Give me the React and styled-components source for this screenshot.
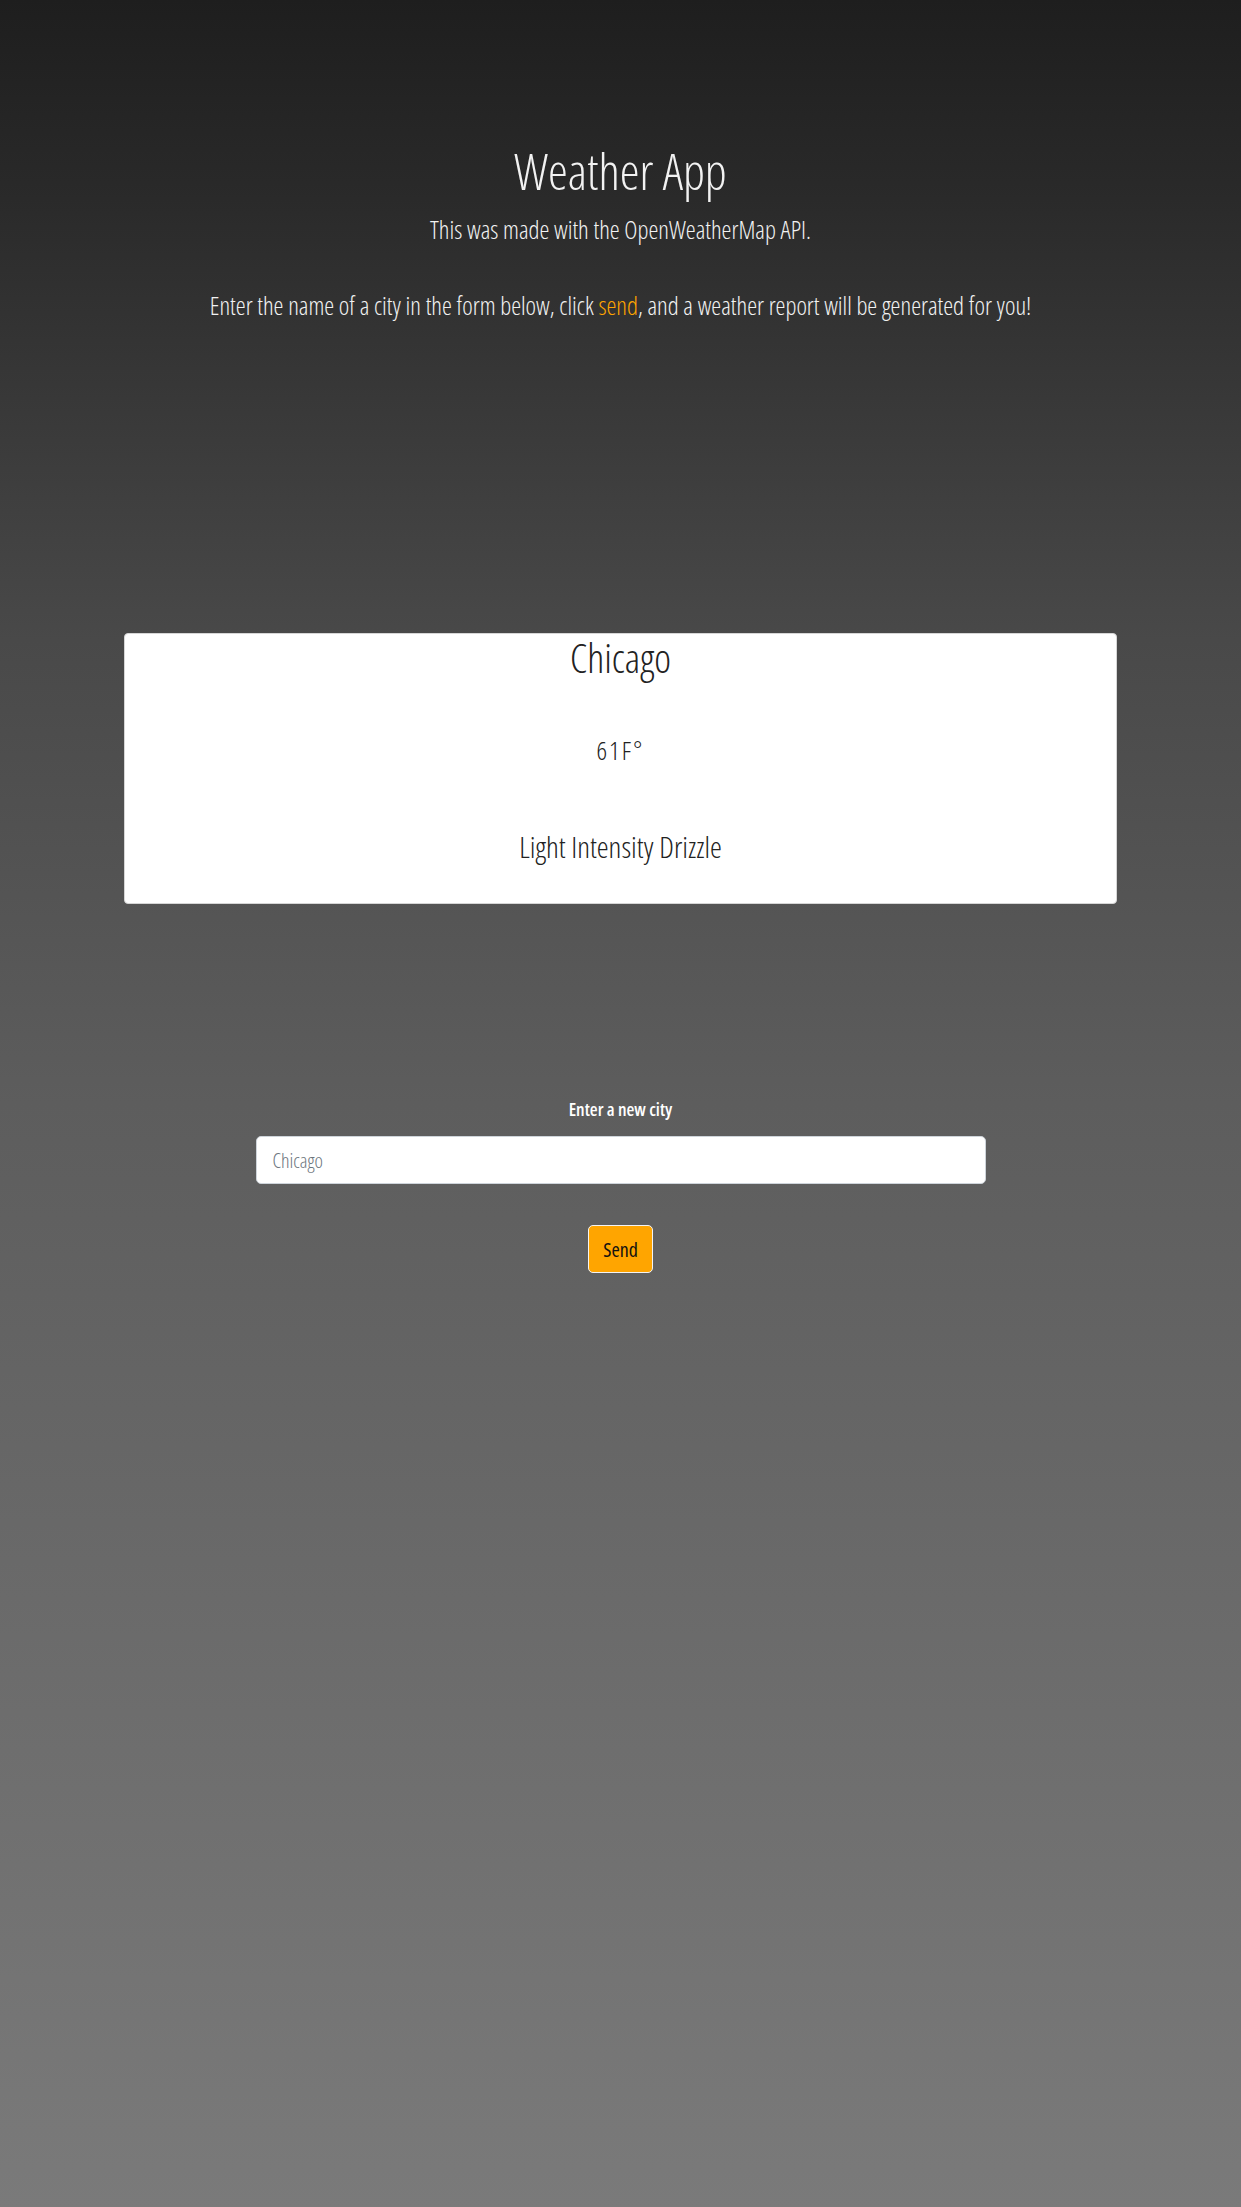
import React, { useState } from "react";
import styled, { createGlobalStyle } from "styled-components";

const GlobalStyle = createGlobalStyle`
	html,
	body {
		margin: 0;
		min-height: 100%;
	}
	body {
		min-height: 100vh;
		font-family: "Open Sans", "Liberation Sans", sans-serif;
		font-stretch: 75%;
		font-weight: 300;
		background: linear-gradient(
			180deg,
			#1e1e1e 0%,
			#2a2a2a 9%,
			#494949 29%,
			#5d5d5d 50%,
			#7a7a7a 100%
		);
		background-attachment: fixed;
		color: #f2f2f2;
	}
`;

const Page = styled.div`
	min-height: 100vh;
	text-align: center;
	overflow: hidden;
`;

const Header = styled.header`
	padding-top: 141px;
`;

const Title = styled.h1`
	margin: 0;
	font-size: 50px;
	font-weight: 300;
	line-height: 1.2;
`;

const Text = styled.p`
	margin: ${(p) => p.$top || 0}px 0 0;
	font-size: 25px;
	line-height: 1.5;
`;

const Highlight = styled.span`
	color: #ffa500;
`;

const Card = styled.section`
	width: 80%;
	margin: 309px auto 0;
	background: #fff;
	border: 1px solid #d6d6d6;
	border-radius: 4px;
	box-sizing: border-box;
	padding: 0 0 38px;
	color: #222;
	display: flex;
	flex-direction: column;
	align-items: center;
`;

const Reading = styled.div`
	margin-top: ${(p) => p.$top || 0}px;
	font-size: ${(p) => p.$size}px;
	letter-spacing: ${(p) => p.$spacing || 0}px;
	line-height: 1.2;
`;

const Form = styled.form`
	width: 730px;
	margin: 192px auto 0;
	display: flex;
	flex-direction: column;
	align-items: center;
`;

const Label = styled.label`
	font-size: 18px;
	font-weight: 600;
	line-height: 1.5;
	color: #fff;
	margin-bottom: 13px;
`;

const Input = styled.input`
	width: 100%;
	height: 48px;
	box-sizing: border-box;
	padding: 8px 16px;
	font-family: inherit;
	font-stretch: inherit;
	font-weight: 300;
	font-size: 20px;
	color: #495057;
	background: #fff;
	border: 1px solid #ced4da;
	border-radius: 5px;
	outline: none;

	&::placeholder {
		color: #6c757d;
	}
`;

const SendButton = styled.button`
	margin-top: 41px;
	height: 48px;
	padding: 0 14px;
	font-family: inherit;
	font-stretch: inherit;
	font-weight: 400;
	font-size: 20px;
	color: #111;
	background: #ffa500;
	border: 1px solid #f4f4f4;
	border-radius: 5px;
	cursor: pointer;
`;

function App() {
	const [city, setCity] = useState("");

	return (
		<Page>
			<GlobalStyle />
			<Header>
				<Title>Weather App</Title>
				<Text $top={10}>This was made with the OpenWeatherMap API.</Text>
				<Text $top={38}>
					Enter the name of a city in the form below, click{" "}
					<Highlight>send</Highlight>, and a weather report will be generated
					for you!
				</Text>
			</Header>

			<Card>
				<Reading $size={40}>Chicago</Reading>
				<Reading $size={26} $spacing={2} $top={53}>
					61F°
				</Reading>
				<Reading $size={30} $top={63}>
					Light Intensity Drizzle
				</Reading>
			</Card>

			<Form onSubmit={(e) => e.preventDefault()}>
				<Label htmlFor="city">Enter a new city</Label>
				<Input
					id="city"
					type="text"
					placeholder="Chicago"
					value={city}
					onChange={(e) => setCity(e.target.value)}
				/>
				<SendButton type="submit">Send</SendButton>
			</Form>
		</Page>
	);
}

export default App;
